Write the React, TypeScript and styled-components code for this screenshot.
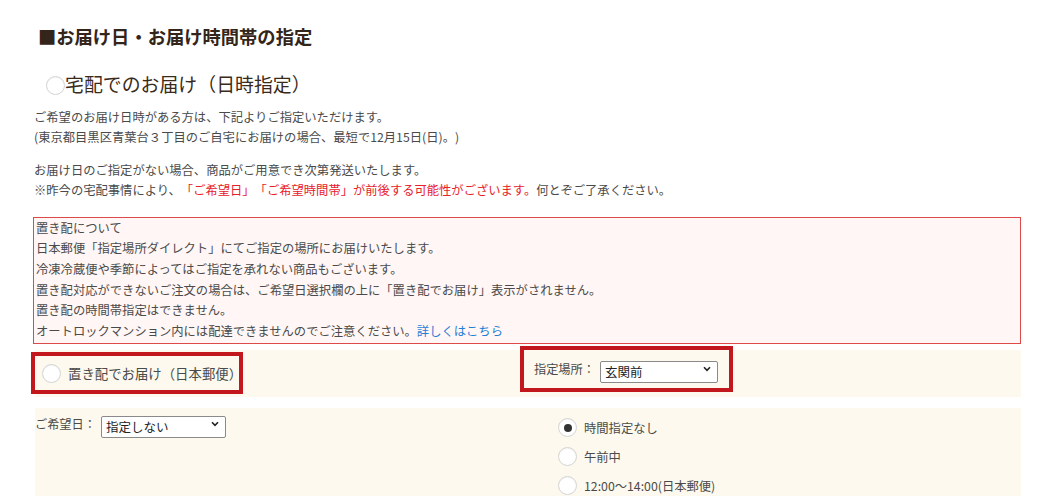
import React from "react";
import styled, { createGlobalStyle } from "styled-components";

const Global = createGlobalStyle`
  html, body { margin: 0; padding: 0; background: #fff; }
  body {
    font-family: "Noto Sans CJK JP", "Noto Sans", sans-serif;
    color: #444;
    text-spacing-trim: space-all;
  }
  * { box-sizing: border-box; }
`;

const Page = styled.div`
  width: 988px;
  margin-left: 33px;
  padding-top: 24px;
`;

const Title = styled.h2`
  margin: 0 0 0 5px;
  font-size: 18.3px;
  line-height: 25px;
  font-weight: 700;
  color: #33251a;
`;

const MainOption = styled.label`
  display: flex;
  align-items: center;
  margin: 19px 0 0 13px;
  height: 30px;
  font-size: 18.9px;
  color: #3a2a1a;
`;

const Radio = styled.span<{ $checked?: boolean }>`
  flex: none;
  width: 19px;
  height: 19px;
  border-radius: 50%;
  background: #fff;
  border: 1px solid #d4d4d4;
  box-shadow: inset 0 1px 1px rgba(0, 0, 0, 0.05);
  display: flex;
  align-items: center;
  justify-content: center;
  &::after {
    content: "";
    display: ${(p) => (p.$checked ? "block" : "none")};
    width: 8px;
    height: 8px;
    border-radius: 50%;
    background: #333;
  }
`;

const MainRadio = styled(Radio)`
  margin-top: 4px;
`;

const Para = styled.p<{ $top: number }>`
  margin: ${(p) => p.$top}px 0 0 1px;
  font-size: 12.3px;
  line-height: 19.7px;
  color: #4a4a4a;
`;

const Red = styled.span`
  color: #e8202a;
`;

const InfoBox = styled.div`
  margin-top: 16px;
  border: 1px solid #dd4a4a;
  background: #fff6f5;
  padding: 0 2px 2px 2px;
  font-size: 12.3px;
  line-height: 20.6px;
  color: #4a4a4a;
`;

const Link = styled.a`
  color: #1f7ed6;
  text-decoration: none;
`;

const Band = styled.div<{ $top: number; $height?: number }>`
  margin: ${(p) => p.$top}px 0 0 2px;
  background: #fdf9ee;
  display: grid;
  grid-template-columns: 485px 1fr;
  ${(p) => (p.$height ? `height: ${p.$height}px;` : "")}
`;

const Highlight = styled.div`
  border: 4px solid #c2171d;
  display: flex;
  align-items: center;
`;

const LeftHighlight = styled(Highlight)`
  margin: 2px 0 0 -4px;
  width: 212px;
  height: 42px;
  padding-left: 7px;
`;

const RightHighlight = styled(Highlight)`
  margin: -4px 0 0 0;
  width: 213px;
  height: 46px;
  padding-left: 10px;
`;

const OptLabel = styled.span<{ $size?: number }>`
  font-size: ${(p) => p.$size ?? 12.3}px;
  color: #4a4a4a;
  margin-left: 7px;
  white-space: nowrap;
`;

const FieldLabel = styled.span`
  font-size: 12.2px;
  line-height: 22px;
  color: #4a4a4a;
  white-space: nowrap;
`;

const SelectWrap = styled.span<{ $width: number }>`
  position: relative;
  display: inline-block;
  width: ${(p) => p.$width}px;
  height: 22px;
  margin-left: 5px;
`;

const Select = styled.select`
  appearance: none;
  -webkit-appearance: none;
  width: 100%;
  height: 100%;
  border: 1px solid #8a8a8a;
  border-radius: 2px;
  background: #fff;
  font-family: "Noto Sans CJK JP", sans-serif;
  font-size: 12.5px;
  color: #222;
  padding: 0 0 0 4px;
  margin: 0;
`;

const Chevron = styled.svg`
  position: absolute;
  right: 7px;
  top: 8px;
  width: 8px;
  height: 6px;
  pointer-events: none;
`;

const DateCell = styled.div`
  display: flex;
  align-items: flex-start;
  padding-top: 5px;
  height: 100px;
`;

const TimeList = styled.div`
  display: flex;
  flex-direction: column;
  gap: 10px;
  padding: 10px 0 0 38px;
`;

const TimeRow = styled.label`
  display: flex;
  align-items: center;
  height: 19px;
`;

const Dropdown = ({ value, width }: { value: string; width: number }) => (
  <SelectWrap $width={width}>
    <Select defaultValue={value}>
      <option>{value}</option>
    </Select>
    <Chevron viewBox="0 0 8 6">
      <path d="M1 1.2 L4 4.4 L7 1.2" fill="none" stroke="#222" strokeWidth="1.6" />
    </Chevron>
  </SelectWrap>
);

export default function App() {
  return (
    <>
      <Global />
      <Page>
        <Title>■お届け日・お届け時間帯の指定</Title>
        <MainOption>
          <MainRadio />
          宅配でのお届け（日時指定）
        </MainOption>
        <Para $top={10}>
          ご希望のお届け日時がある方は、下記よりご指定いただけます。
          <br />
          (東京都目黒区青葉台３丁目のご自宅にお届けの場合、最短で12月15日(日)。)
        </Para>
        <Para $top={14}>
          お届け日のご指定がない場合、商品がご用意でき次第発送いたします。
          <br />
          ※昨今の宅配事情により、<Red>「ご希望日」「ご希望時間帯」が前後する可能性がございます。</Red>何とぞご了承ください。
        </Para>
        <InfoBox>
          置き配について
          <br />
          日本郵便「指定場所ダイレクト」にてご指定の場所にお届けいたします。
          <br />
          冷凍冷蔵便や季節によってはご指定を承れない商品もございます。
          <br />
          置き配対応ができないご注文の場合は、ご希望日選択欄の上に「置き配でお届け」表示がされません。
          <br />
          置き配の時間帯指定はできません。
          <br />
          オートロックマンション内には配達できませんのでご注意ください。<Link href="#">詳しくはこちら</Link>
        </InfoBox>
        <Band $top={6} $height={47}>
          <LeftHighlight>
            <Radio />
            <OptLabel $size={13.4}>置き配でお届け（日本郵便）</OptLabel>
          </LeftHighlight>
          <RightHighlight>
            <FieldLabel>指定場所：</FieldLabel>
            <Dropdown value="玄関前" width={118} />
          </RightHighlight>
        </Band>
        <Band $top={11}>
          <DateCell>
            <FieldLabel>ご希望日：</FieldLabel>
            <Dropdown value="指定しない" width={125} />
          </DateCell>
          <TimeList>
            <TimeRow>
              <Radio $checked />
              <OptLabel>時間指定なし</OptLabel>
            </TimeRow>
            <TimeRow>
              <Radio />
              <OptLabel>午前中</OptLabel>
            </TimeRow>
            <TimeRow>
              <Radio />
              <OptLabel>12:00～14:00(日本郵便)</OptLabel>
            </TimeRow>
          </TimeList>
        </Band>
      </Page>
    </>
  );
}
